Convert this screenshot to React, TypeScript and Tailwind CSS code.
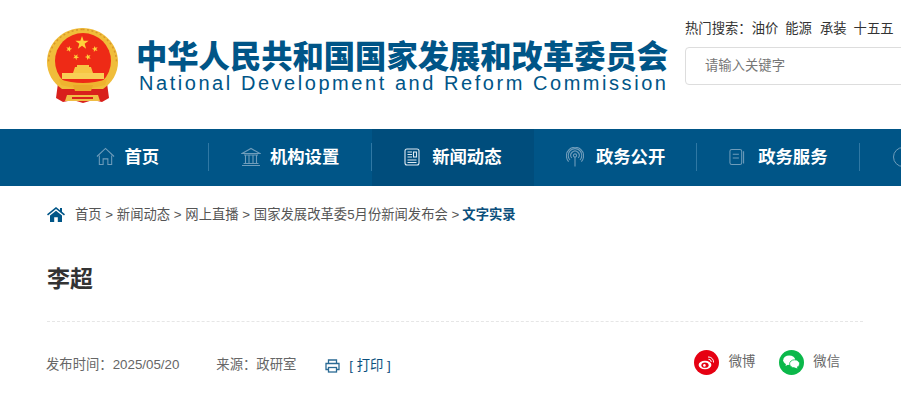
import type { ReactNode } from 'react'

const FONT = '"Liberation Sans", "Noto Sans CJK SC", sans-serif'
const CJK = '"Noto Sans CJK SC", "Liberation Sans", sans-serif'

function Star({ cx, cy, r, rot = 0 }: { cx: number; cy: number; r: number; rot?: number }) {
  const pts: string[] = []
  for (let i = 0; i < 10; i++) {
    const rad = i % 2 === 0 ? r : r * 0.4
    const a = ((-90 + rot + i * 36) * Math.PI) / 180
    pts.push(`${(cx + rad * Math.cos(a)).toFixed(2)},${(cy + rad * Math.sin(a)).toFixed(2)}`)
  }
  return <polygon points={pts.join(' ')} fill="#ffd23a" />
}

function Emblem() {
  return (
    <svg width="71" height="77" viewBox="0 0 71 77" className="shrink-0 blur-[0.4px]">
      {/* ribbon */}
      <path d="M11 56 L9 71 L16 75 L26 73 L36 76 L46 73 L55 75 L62 71 L60 56 Z" fill="#d9201c" />
      {/* wheat ring */}
      <path d="M35.5 1 C55 1 71 16 71 35 C71 46 65 56 56 62 L15 62 C6 56 0 46 0 35 C0 16 16 1 35.5 1 Z" fill="#f0bd3a" />
      <path d="M35.5 2.5 C54 2.5 69.5 17 69.5 35" fill="none" stroke="#d8962a" strokeWidth="1.5" strokeDasharray="2 2.5" />
      <path d="M35.5 2.5 C17 2.5 1.5 17 1.5 35" fill="none" stroke="#d8962a" strokeWidth="1.5" strokeDasharray="2 2.5" />
      <circle cx="36" cy="34" r="28" fill="#ee2a16" />
      <Star cx={35} cy={16} r={7} />
      <Star cx={22} cy={22} r={3.2} rot={15} />
      <Star cx={29} cy={30} r={3.2} rot={30} />
      <Star cx={41} cy={30} r={3.2} rot={-20} />
      <Star cx={48} cy={22} r={3.2} rot={-15} />
      {/* gate */}
      <path d="M26 46 L46 46 L44 40 L28 40 Z" fill="#f6c644" />
      <rect x="30" y="38" width="12" height="2.5" fill="#f6c644" />
      <rect x="15" y="46" width="42" height="6" fill="#f8cf55" />
      <path d="M12 52 Q36 60 60 52 L58 58 Q36 65 14 58 Z" fill="#efb32f" />
      {/* gear & ribbon front */}
      <path d="M26 58 L46 58 L44 64 L28 64 Z" fill="#e9a92a" />
      <path d="M20 68 L51 68 L53 74 L18 74 Z" fill="#f0bd45" />
      <rect x="25" y="70" width="21" height="2" fill="#d9201c" />
    </svg>
  )
}

function HomeIcon() {
  return (
    <svg width="19" height="19" viewBox="0 0 20 20" fill="none" stroke="#6f9dbb" strokeWidth="1.1">
      <path d="M1 10 L10 1.5 L19 10" />
      <path d="M3.5 9 V18.5 H7.5 V12.5 H12.5 V18.5 H16.5 V9" />
    </svg>
  )
}

function BankIcon() {
  return (
    <svg width="20" height="20" viewBox="0 0 20 20" fill="none" stroke="#6f9dbb" strokeWidth="1.1">
      <path d="M1 6.5 L10 1.5 L19 6.5 Z" />
      <path d="M3 8 H17 M4.5 8.5 V16 M8 8.5 V16 M12 8.5 V16 M15.5 8.5 V16 M2.5 16.5 H17.5 M1 18.5 H19" />
    </svg>
  )
}

function NewsIcon() {
  return (
    <svg width="16" height="18" viewBox="0 0 16 18" fill="none" stroke="#dfeaf2" strokeWidth="1.1">
      <rect x="1" y="1" width="14" height="16" rx="2" />
      <path d="M3.5 4 H8 M3.5 6.5 H8 M3.5 9 H8 M3.5 12 H12.5 M3.5 14.5 H12.5" />
      <rect x="9.5" y="4" width="3" height="5" />
    </svg>
  )
}

function SignalIcon() {
  return (
    <svg width="18" height="20" viewBox="0 0 18 20" fill="none" stroke="#6f9dbb" strokeWidth="1.1">
      <path d="M9 10 V19.5" />
      <circle cx="9" cy="8.5" r="1.6" />
      <path d="M5.8 11 A4.2 4.2 0 1 1 12.2 11" />
      <path d="M4 13 A6.8 6.8 0 1 1 14 13" />
      <path d="M2.6 14.6 A8.6 8.6 0 1 1 15.4 14.6" />
    </svg>
  )
}

function BookIcon() {
  return (
    <svg width="16" height="18" viewBox="0 0 17 18" fill="none" stroke="#6f9dbb" strokeWidth="1.1">
      <rect x="1" y="1" width="12.5" height="16" rx="2" />
      <path d="M15.5 3 V16" />
      <path d="M4 6 H10.5 M4 10 H10.5" />
    </svg>
  )
}

function NavItem({ icon, label, gap, active, last }: { icon: ReactNode; label: string; gap: string; active?: boolean; last?: boolean }) {
  return (
    <div className={`relative flex h-full w-[162.75px] shrink-0 items-center justify-center pb-[2px] ${gap} ${active ? 'bg-[#004d7c]' : ''}`}>
      {icon}
      <span className="mb-[2px] text-[17.33px] font-bold text-white" style={{ fontFamily: CJK }}>{label}</span>
      {!active && !last && <span className="absolute right-0 top-[14px] h-[28px] w-px bg-[#2f78a4]" />}
    </div>
  )
}

export default function App() {
  return (
    <div className="h-[404px] w-[901px] overflow-hidden bg-white text-[13.33px]" style={{ fontFamily: FONT }}>
      <header className="flex h-[129px] pl-[47px]">
        <div className="mt-[27px]">
          <Emblem />
        </div>
        <div className="ml-[18px] mt-[36px] w-[541px] shrink-0">
          <h1 className="whitespace-nowrap text-[31.3px] font-black leading-[37px] text-[#005587]" style={{ fontFamily: CJK }}>中华人民共和国国家发展和改革委员会</h1>
          <p className="ml-[3px] whitespace-nowrap text-[20px] leading-[20px] tracking-[2.55px] text-[#005587]">
            National Development and Reform Commission
          </p>
        </div>
        <div className="ml-[8px] w-[300px] shrink-0 pt-[19px]">
          <div className="flex gap-[7px] whitespace-nowrap leading-[20px] text-[#333]">
            <span>热门搜索：油价</span>
            <span>能源</span>
            <span className="ml-[1px]">承装</span>
            <span>十五五</span>
          </div>
          <div className="mt-[8px] flex h-[38px] items-center rounded-[4px] border border-[#dddddd] pl-[19px] text-[#777]">
            请输入关键字
          </div>
        </div>
      </header>

      <nav className="flex h-[57px] bg-[#005587] pl-[46px]">
        <NavItem icon={<HomeIcon />} label="首页" gap="gap-[10px]" />
        <NavItem icon={<BankIcon />} label="机构设置" gap="gap-[9px]" />
        <NavItem icon={<NewsIcon />} label="新闻动态" gap="gap-[12px]" active />
        <NavItem icon={<SignalIcon />} label="政务公开" gap="gap-[12px]" />
        <NavItem icon={<BookIcon />} label="政务服务" gap="gap-[13px]" />
        <div className="ml-[33px] flex h-full items-center pb-[2px]">
          <span className="h-[20px] w-[20px] rounded-full border border-[#6f9dbb]" />
        </div>
      </nav>

      <main className="px-[47px]">
        <div className="flex h-[57px] items-center whitespace-nowrap text-[#555]">
          <svg width="18" height="15" viewBox="0 0 18 15" className="mr-[10px] shrink-0" fill="#005587">
            <path d="M9 0 L13 3.2 V1 H15 V4.8 L18 7.3 L17 8.4 L9 1.9 L1 8.4 L0 7.3 Z" />
            <path d="M3 8.6 L9 3.8 L15 8.6 V15 H10.8 V10.2 H7.2 V15 H3 Z" />
          </svg>
          <span>首页 &gt; 新闻动态 &gt; 网上直播 &gt; 国家发展改革委5月份新闻发布会 &gt;</span>
          <span className="ml-[3px] font-bold text-[#0b4f7c]">文字实录</span>
        </div>
        <h2 className="mt-[17px] text-[23px] font-bold leading-[34px] text-[#333]" style={{ fontFamily: CJK }}>李超</h2>
        <div className="mt-[27px] w-[816px] border-t border-dashed border-[#e6e6e6]" />
        <div className="flex h-[80px] w-[816px] items-center text-[#666]">
          <span className="-ml-px mt-[5px]">发布时间：2025/05/20</span>
          <span className="ml-[37px] mt-[5px]">来源：政研室</span>
          <svg width="15" height="14" viewBox="0 0 15 14" className="ml-[29px] mt-[7px]" fill="none" stroke="#2a6a94" strokeWidth="1.3">
            <path d="M3.5 4.5 V1 H11.5 V4.5" />
            <path d="M3 10.5 H1 V4.5 H14 V10.5 H12" />
            <rect x="3.5" y="8.5" width="8" height="4.5" />
          </svg>
          <span className="ml-[9px] mt-[8px] text-[#0b4f7c]">[ 打印 ]</span>
          <div className="ml-auto mr-[23px] flex items-center gap-[10px]">
            <span className="flex h-[25px] w-[25px] items-center justify-center rounded-full bg-[#e60012]">
              <svg width="17" height="15" viewBox="0 0 17 15">
                <ellipse cx="7" cy="10" rx="6.4" ry="4.2" fill="#fff" />
                <ellipse cx="7" cy="10.2" rx="3.6" ry="2.6" fill="#e60012" />
                <circle cx="6.4" cy="10.4" r="1.3" fill="#fff" />
                <path d="M10 2 A5 5 0 0 1 15.5 7.5 M10.5 4.3 A2.8 2.8 0 0 1 13.3 7" fill="none" stroke="#fff" strokeWidth="1" />
              </svg>
            </span>
            <span>微博</span>
            <span className="ml-[14px] flex h-[25px] w-[25px] items-center justify-center rounded-full bg-[#0bb84a]">
              <svg width="17" height="14" viewBox="0 0 17 14" fill="#fff">
                <ellipse cx="6.2" cy="5.2" rx="6" ry="4.8" />
                <path d="M3 8 L2.6 11 L6 9 Z" />
                <ellipse cx="11.6" cy="8.8" rx="5" ry="4" stroke="#0bb84a" strokeWidth="0.8" />
                <path d="M13.5 11.5 L14.5 13.6 L11.5 12.5 Z" />
              </svg>
            </span>
            <span className="-ml-px">微信</span>
          </div>
        </div>
      </main>
    </div>
  )
}
